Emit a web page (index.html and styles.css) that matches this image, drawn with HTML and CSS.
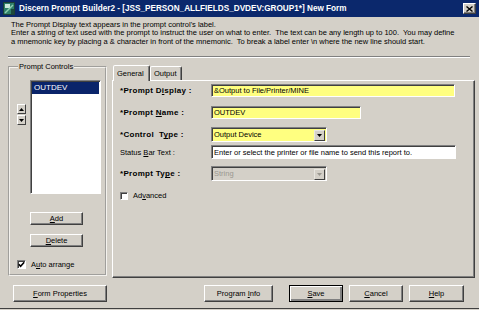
FILE: index.html
```html
<!DOCTYPE html>
<html>
<head>
<meta charset="utf-8">
<link rel="stylesheet" href="styles.css">
</head>
<body>
<div class="window">
  <div class="titlebar">
    <svg class="appicon" width="12" height="13" viewBox="0 0 12 13">
      <rect x="0.5" y="0.5" width="11" height="12" fill="#2f7f6a" stroke="#1d3f36"/>
      <rect x="2" y="2" width="5" height="4" fill="#cfe8dc"/>
      <path d="M2 11 L10 3" stroke="#8fd0b0" stroke-width="1.5"/>
      <rect x="8" y="7" width="3" height="5" fill="#1c4a3c"/>
    </svg>
    <span class="title">Discern Prompt Builder2 - [JSS_PERSON_ALLFIELDS_DVDEV:GROUP1*] New Form</span>
    <span class="closebtn">
      <svg width="7" height="6" viewBox="0 0 7 6"><path d="M0.5 0.5 L6.5 5.5 M6.5 0.5 L0.5 5.5" stroke="#000" stroke-width="1.4"/></svg>
    </span>
  </div>
  <p class="desc">The Prompt Display text appears in the prompt control's label.<br>Enter a string of text used with the prompt to instruct the user on what to enter.&nbsp; The text can be any length up to 100.&nbsp; You may define<br>a mnemonic key by placing a &amp; character in front of the mnemonic.&nbsp; To break a label enter \n where the new line should start.</p>
  <div class="sep"></div>
  <div class="main">
    <fieldset class="group">
      <legend>Prompt Controls</legend>
      <div class="listrow">
        <div class="arrows">
          <span class="arrow up"><svg width="5" height="3" viewBox="0 0 5 3"><path d="M0 3 L2.5 0 L5 3 Z" fill="#000"/></svg></span>
          <span class="arrow down"><svg width="5" height="3" viewBox="0 0 5 3"><path d="M0 0 L2.5 3 L5 0 Z" fill="#000"/></svg></span>
        </div>
        <div class="listbox">
          <div class="item selected">OUTDEV</div>
        </div>
      </div>
      <div class="btn addbtn"><span><u>A</u>dd</span></div>
      <div class="btn delbtn"><span><u>D</u>elete</span></div>
      <div class="check autoarr">
        <span class="box"><svg width="7" height="7" viewBox="0 0 7 7"><path d="M0.8 3.2 L2.6 5.2 L6.2 1.2" stroke="#000" stroke-width="1.6" fill="none"/></svg></span>
        <span>A<u>u</u>to arrange</span>
      </div>
    </fieldset>
    <div class="tabs">
      <div class="tabstrip">
        <div class="tab active">General</div>
        <div class="tab">Output</div>
      </div>
      <div class="panel">
        <div class="row r1">
          <span class="lbl bold">*Prompt D<u>i</u>splay :</span>
          <span class="field yellow w-long">&amp;Output to File/Printer/MINE</span>
        </div>
        <div class="row r2">
          <span class="lbl bold">*Prompt <u>N</u>ame :</span>
          <span class="field yellow w-mid">OUTDEV</span>
        </div>
        <div class="row r3">
          <span class="lbl bold">*Control&nbsp; T<u>y</u>pe :</span>
          <span class="field yellow select w-sel"><span class="seltext">Output Device</span><span class="ddbtn"><svg width="5" height="3" viewBox="0 0 5 3"><path d="M0 0 L2.5 3 L5 0 Z" fill="#000"/></svg></span></span>
        </div>
        <div class="row r4">
          <span class="lbl">Status <u>B</u>ar Text :</span>
          <span class="field white w-status">Enter or select the printer or file name to send this report to.</span>
        </div>
        <div class="row r5">
          <span class="lbl bold">*Prompt Ty<u>p</u>e :</span>
          <span class="field disabled select w-sel"><span class="seltext">String</span><span class="ddbtn"><svg width="5" height="3" viewBox="0 0 5 3"><path d="M0 0 L2.5 3 L5 0 Z" fill="#9a9890"/></svg></span></span>
        </div>
        <div class="check adv">
          <span class="box"></span>
          <span>Ad<u>v</u>anced</span>
        </div>
      </div>
    </div>
  </div>
  <div class="bottom">
    <div class="btn formprops"><span><u>F</u>orm Properties</span></div>
    <div class="btn proginfo"><span>Program <u>I</u>nfo</span></div>
    <div class="btn default savebtn"><span><u>S</u>ave</span></div>
    <div class="btn cancelbtn"><span><u>C</u>ancel</span></div>
    <div class="btn helpbtn"><span><u>H</u>elp</span></div>
  </div>
</div>
</body>
</html>
```

FILE: styles.css
```css
html, body {
  margin: 0;
  padding: 0;
  background: #d4d0c8;
}

.window {
  width: 479px;
  height: 308px;
  border-bottom: 1px solid #404040;
  background: #d4d0c8;
  font-family: "Liberation Sans", Arial, sans-serif;
  font-size: 7.5px;
  color: #000;
  display: flex;
  flex-direction: column;
  overflow: hidden;
}

u { text-decoration: underline; text-underline-offset: 1px; }

/* title bar */
.titlebar {
  height: 17px;
  flex: none;
  background: #0b286c;
  display: flex;
  align-items: center;
  padding: 0 3px;
}
.appicon { flex: none; margin-right: 4px; }
.title {
  color: #fff;
  font-weight: bold;
  font-size: 8.2px;
  white-space: nowrap;
}
.closebtn {
  margin-left: auto;
  width: 13px;
  height: 11px;
  box-sizing: border-box;
  background: #d4d0c8;
  border: 1px solid;
  border-color: #fff #404040 #404040 #fff;
  box-shadow: inset -1px -1px 0 #808080;
  display: flex;
  align-items: center;
  justify-content: center;
}

/* description */
.desc {
  margin: 0;
  padding: 4px 0 0 11px;
  line-height: 8.4px;
  white-space: nowrap;
}
.sep {
  margin: 10px 9px 0 8px;
  border-top: 1px solid #808080;
  border-bottom: 1px solid #fff;
}

/* main area */
.main {
  display: flex;
  margin-top: 4px;
  padding-left: 8px;
  height: 216px;
  gap: 5px;
}

.group {
  margin: 0;
  padding: 0 0 0 7px;
  width: 99px;
  height: 214px;
  box-sizing: border-box;
  border: 2px groove #f4f2ee;
  min-width: 0;
}
.group legend {
  padding: 0 1px;
  margin-left: 1px;
  line-height: 9px;
}
.listrow {
  display: flex;
  margin-top: 9px;
  gap: 4px;
}
.arrows {
  display: flex;
  flex-direction: column;
  gap: 1px;
  padding-top: 24px;
}
.arrow {
  width: 9px;
  height: 10px;
  box-sizing: border-box;
  background: #d4d0c8;
  border: 1px solid;
  border-color: #fff #404040 #404040 #fff;
  display: flex;
  align-items: center;
  justify-content: center;
}
.listbox {
  width: 71px;
  height: 114px;
  box-sizing: border-box;
  background: #fff;
  border: 1px solid;
  border-color: #808080 #fff #fff #808080;
  box-shadow: inset 1px 1px 0 #404040;
  padding: 1px 1px 0 1px;
}
.item {
  height: 12px;
  line-height: 12px;
  padding-left: 2px;
  font-size: 8px;
}
.item.selected {
  background: #0a246a;
  color: #fff;
}

/* buttons */
.btn {
  box-sizing: border-box;
  background: #d4d0c8;
  border: 1px solid;
  border-color: #fff #404040 #404040 #fff;
  box-shadow: inset -1px -1px 0 #808080;
  display: flex;
  align-items: center;
  justify-content: center;
  white-space: nowrap;
}
.btn.default {
  border: 1px solid #000;
  box-shadow: inset 1px 1px 0 #fff, inset -2px -2px 0 #808080;
}
.addbtn, .delbtn {
  width: 53px;
  height: 13px;
  margin-left: 13px;
}
.addbtn { margin-top: 18px; }
.delbtn { margin-top: 9px; }

.check {
  display: flex;
  align-items: center;
  gap: 5px;
}
.box {
  width: 9px;
  height: 9px;
  box-sizing: border-box;
  background: #fff;
  border: 1px solid;
  border-color: #808080 #fff #fff #808080;
  box-shadow: inset 1px 1px 0 #404040;
  display: flex;
  align-items: center;
  justify-content: center;
}
.autoarr {
  margin-top: 13px;
}

/* tabs */
.tabs {
  width: 363px;
  display: flex;
  flex-direction: column;
}
.tabstrip {
  height: 18px;
  display: flex;
  align-items: flex-end;
  padding-left: 1px;
  position: relative;
  z-index: 1;
}
.tab {
  height: 14px;
  box-sizing: border-box;
  border: 1px solid;
  border-bottom: none;
  border-color: #fff #404040 transparent #fff;
  box-shadow: inset -1px 0 0 #808080;
  border-radius: 2px 2px 0 0;
  padding: 0 3px;
  display: flex;
  align-items: center;
  background: #d4d0c8;
}
.tab.active {
  height: 16px;
  width: 37px;
  margin-bottom: -1px;
  padding-bottom: 1px;
}
.tab:not(.active) {
  width: 32px;
  margin-bottom: 0;
}
.panel {
  height: 198px;
  box-sizing: border-box;
  border: 1px solid;
  border-color: #fff #404040 #404040 #fff;
  box-shadow: inset -1px -1px 0 #808080;
  padding: 3px 0 0 7px;
}
.row {
  display: flex;
  align-items: center;
}
.lbl {
  width: 91px;
  flex: none;
  white-space: nowrap;
}
.bold {
  font-weight: bold;
  font-size: 8px;
  letter-spacing: 0.3px;
}
.r1 { height: 13px; }
.r2 { height: 13px; margin-top: 9px; }
.r3 { height: 15px; margin-top: 8px; }
.r4 { height: 14px; margin-top: 3px; }
.r5 { height: 15px; margin-top: 7px; }

.field {
  height: 100%;
  box-sizing: border-box;
  border: 1px solid;
  border-color: #808080 #fff #fff #808080;
  box-shadow: inset 1px 1px 0 #404040;
  padding-left: 2px;
  display: flex;
  align-items: center;
  white-space: nowrap;
  overflow: hidden;
}
.yellow { background: #ffff80; }
.white { background: #fff; }
.disabled { background: #d4d0c8; color: #9a9890; }
.w-long { width: 244px; }
.w-mid { width: 150px; }
.w-sel { width: 116px; }
.w-status { width: 245px; }
.select { padding-right: 1px; }
.seltext { flex: 1; }
.ddbtn {
  width: 11px;
  height: calc(100% - 2px);
  box-sizing: border-box;
  background: #d4d0c8;
  border: 1px solid;
  border-color: #e8e6e0 #404040 #404040 #e8e6e0;
  display: flex;
  align-items: center;
  justify-content: center;
  margin-top: 1px;
}
.adv {
  margin-top: 10px;
  gap: 5px;
}
.adv .box {
  width: 8px;
  height: 8px;
}

/* bottom row */
.bottom {
  display: flex;
  height: 17px;
  margin-top: 7px;
  padding-left: 13px;
}
.bottom .btn { height: 17px; }
.formprops { width: 94px; }
.proginfo { width: 69px; margin-left: 97px; }
.savebtn { width: 54px; margin-left: 16px; }
.cancelbtn { width: 54px; margin-left: 6px; }
.helpbtn { width: 55px; margin-left: 6px; }
```
